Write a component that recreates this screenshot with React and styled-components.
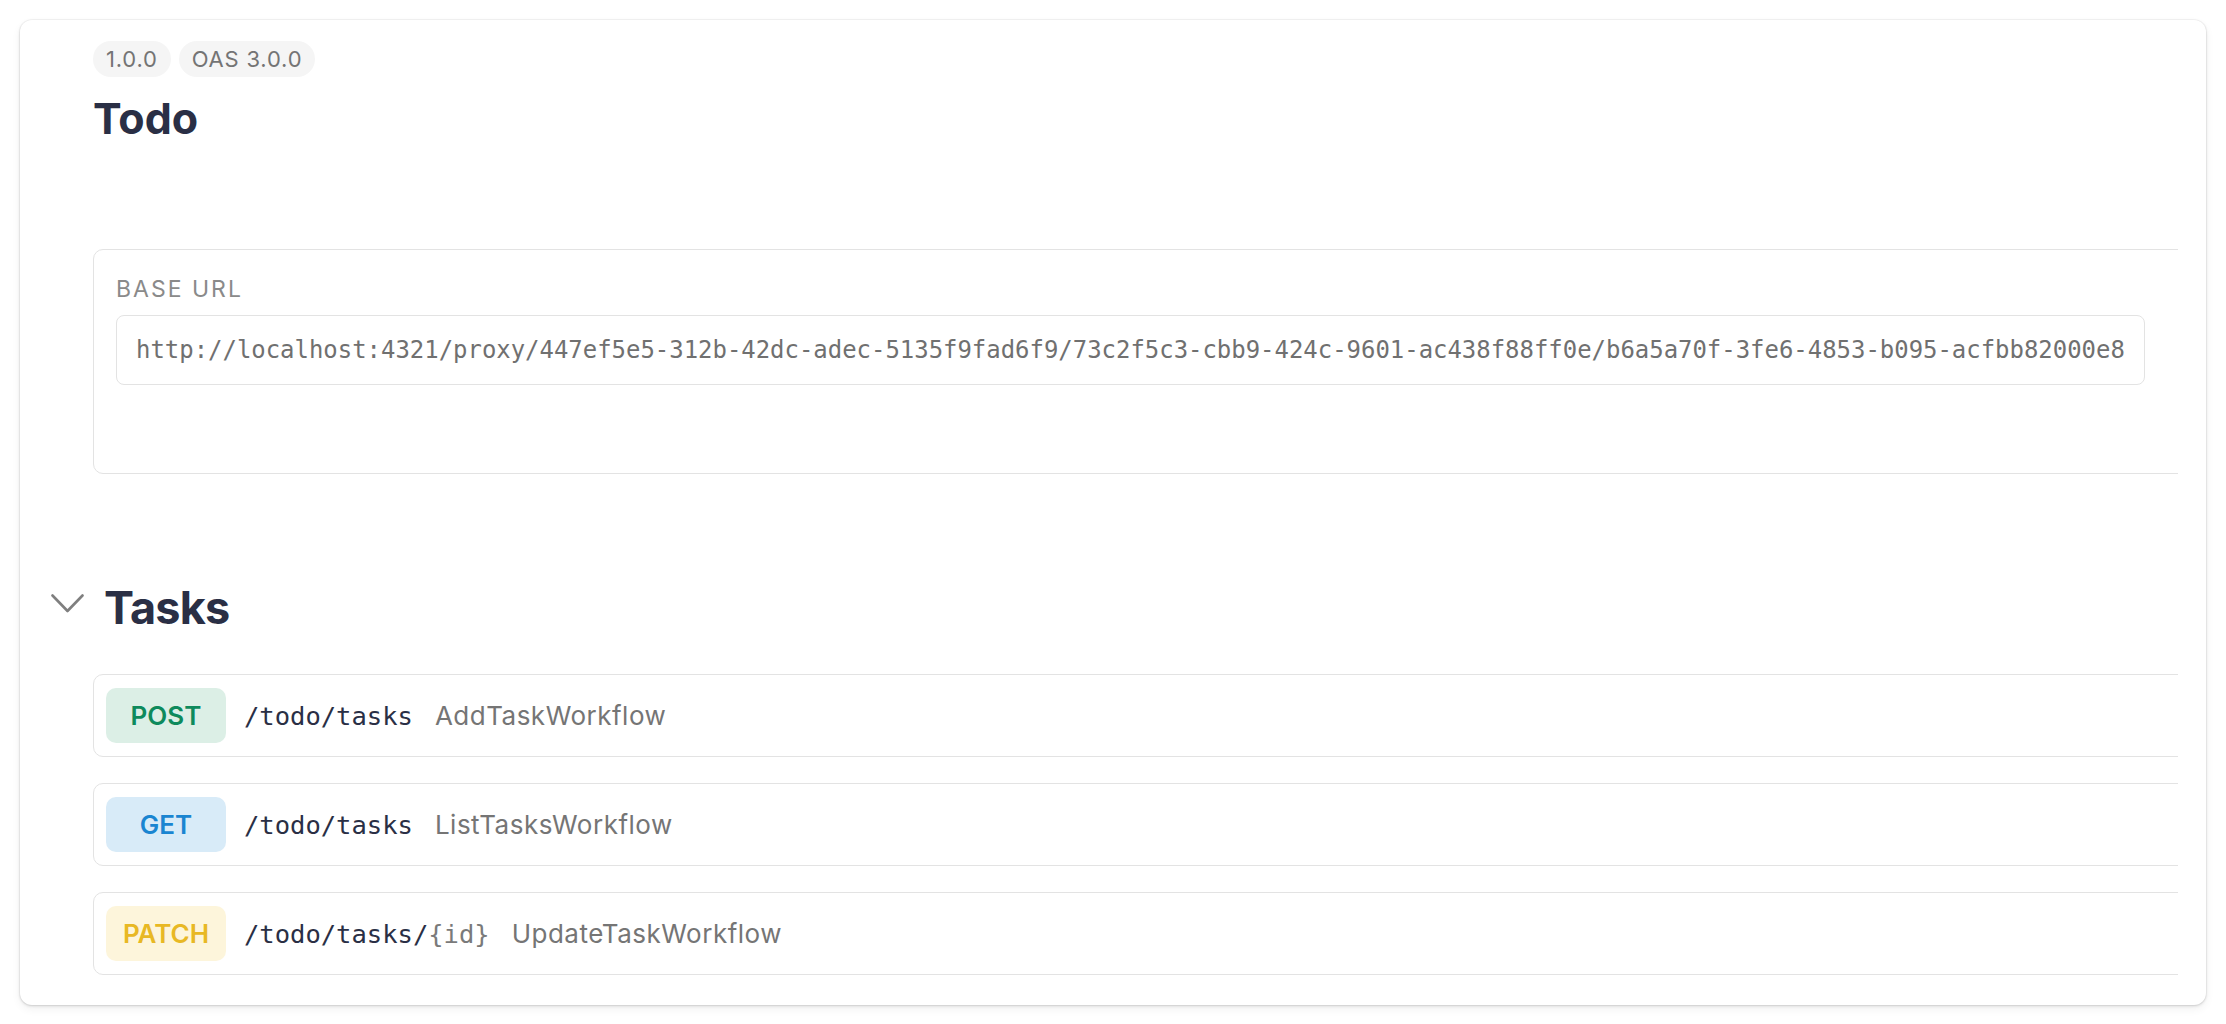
import React from 'react'
import styled, { createGlobalStyle } from 'styled-components'

const GlobalStyle = createGlobalStyle`
    html, body {
        margin: 0;
        padding: 0;
        background: #ffffff;
    }
    body {
        font-family: Inter, "Noto Sans", sans-serif;
    }
`

const Page = styled.div`
    padding: 20px;
`

const Card = styled.div`
    background: #ffffff;
    border-radius: 12px;
    padding: 21px 28px 30px 0;
    box-shadow:
        0 0 0 1px rgba(0, 0, 0, 0.035),
        0 1px 3px rgba(0, 0, 0, 0.14),
        0 4px 10px rgba(0, 0, 0, 0.06);
`

const Clip = styled.div`
    overflow: hidden;
    padding-left: 73px;
`

const Tags = styled.div`
    display: flex;
    gap: 8px;
`

const Tag = styled.span`
    display: inline-flex;
    align-items: center;
    height: 36px;
    padding: 0 13px;
    border-radius: 18px;
    background: #f5f5f5;
    color: #747474;
    font-size: 22px;
    letter-spacing: 0.8px;
`

const Title = styled.h1`
    margin: 15px 0 0;
    font-size: 43px;
    line-height: 52px;
    font-weight: 700;
    color: #2a2f45;
`

const ServerBox = styled.div`
    margin-top: 105px;
    margin-right: -40px;
    border: 1px solid #e3e3e3;
    border-radius: 10px;
    padding: 26px 22px 88px;
`

const Label = styled.div`
    font-size: 23px;
    line-height: 26px;
    letter-spacing: 2px;
    color: #8a8a8a;
`

const UrlField = styled.div`
    display: inline-block;
    margin-top: 13px;
    border: 1px solid #e3e3e3;
    border-radius: 8px;
    padding: 20px 19px;
    font-family: "DejaVu Sans Mono", "Liberation Mono", monospace;
    font-size: 23.95px;
    line-height: 28px;
    color: #707070;
    white-space: nowrap;
`

const SectionHead = styled.div`
    display: flex;
    align-items: center;
    gap: 20px;
    margin: 106px 0 0 -42px;
`

const Chevron = styled.svg`
    flex: none;
    margin-bottom: 8px;
`

const SectionTitle = styled.h2`
    margin: 0;
    font-size: 45px;
    line-height: 55px;
    letter-spacing: -0.8px;
    font-weight: 700;
    color: #2a2f45;
`

const Endpoints = styled.div`
    display: flex;
    flex-direction: column;
    gap: 26px;
    margin-top: 39px;
`

const Endpoint = styled.div`
    display: flex;
    align-items: center;
    margin-right: -40px;
    border: 1px solid #e3e3e3;
    border-radius: 10px;
    padding: 13px 12px;
`

const methodColors = {
    POST: { bg: '#dcefe6', fg: '#0e8a5c' },
    GET: { bg: '#d8ebf8', fg: '#1a85d1' },
    PATCH: { bg: '#fdf5db', fg: '#e8b824' },
}

const Method = styled.span`
    display: flex;
    align-items: center;
    justify-content: center;
    flex: none;
    width: 120px;
    height: 55px;
    border-radius: 10px;
    background: ${({ method }) => methodColors[method].bg};
    color: ${({ method }) => methodColors[method].fg};
    font-size: 26px;
    font-weight: 600;
`

const Path = styled.span`
    margin-left: 18px;
    font-family: "DejaVu Sans Mono", "Liberation Mono", monospace;
    font-size: 25.5px;
    color: #2a2f45;
    white-space: nowrap;
`

const Param = styled.span`
    color: #7a7a7a;
`

const Summary = styled.span`
    margin-left: 22px;
    font-size: 26px;
    letter-spacing: 0.5px;
    color: #757575;
    white-space: nowrap;
`

const endpoints = [
    { method: 'POST', path: '/todo/tasks', summary: 'AddTaskWorkflow' },
    { method: 'GET', path: '/todo/tasks', summary: 'ListTasksWorkflow' },
    { method: 'PATCH', path: '/todo/tasks/', param: '{id}', summary: 'UpdateTaskWorkflow' },
]

const baseUrl =
    'http://localhost:4321/proxy/447ef5e5-312b-42dc-adec-5135f9fad6f9/73c2f5c3-cbb9-424c-9601-ac438f88ff0e/b6a5a70f-3fe6-4853-b095-acfbb82000e8'

const App = () => {
    return (
        <Page>
            <GlobalStyle />
            <Card>
                <Clip>
                    <Tags>
                        <Tag>1.0.0</Tag>
                        <Tag>OAS 3.0.0</Tag>
                    </Tags>
                    <Title>Todo</Title>

                    <ServerBox>
                        <Label>BASE URL</Label>
                        <UrlField>{baseUrl}</UrlField>
                    </ServerBox>

                    <SectionHead>
                        <Chevron width="33" height="19" viewBox="0 0 33 19" fill="none">
                            <path
                                d="M1.5 1.5 L16.5 17 L31.5 1.5"
                                stroke="#7f7f7f"
                                strokeWidth="2.6"
                                strokeLinecap="round"
                                strokeLinejoin="round"
                            />
                        </Chevron>
                        <SectionTitle>Tasks</SectionTitle>
                    </SectionHead>

                    <Endpoints>
                        {endpoints.map((ep) => (
                            <Endpoint key={ep.method}>
                                <Method method={ep.method}>{ep.method}</Method>
                                <Path>
                                    {ep.path}
                                    {ep.param && <Param>{ep.param}</Param>}
                                </Path>
                                <Summary>{ep.summary}</Summary>
                            </Endpoint>
                        ))}
                    </Endpoints>
                </Clip>
            </Card>
        </Page>
    )
}

export default App
